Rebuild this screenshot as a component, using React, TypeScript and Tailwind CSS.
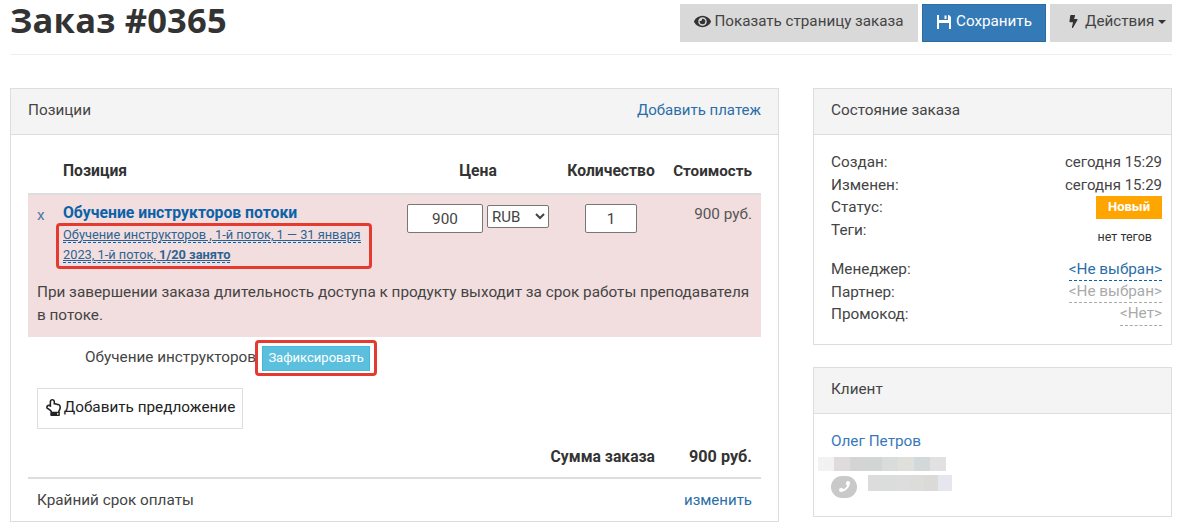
import React from "react";
import { FaEye, FaBolt, FaRegHandPointUp, FaPhoneAlt } from "react-icons/fa";

function Mosaic({ colors, cell, h }: { colors: string[]; cell: string; h: string }) {
  return (
    <div className={`flex ${h}`}>
      {colors.map((c, i) => (
        <div key={i} className={cell} style={{ backgroundColor: c }} />
      ))}
    </div>
  );
}

function StateRow({ label, children, cls = "" }: { label: string; children: React.ReactNode; cls?: string }) {
  return (
    <div className={`flex justify-between ${cls}`}>
      <span>{label}</span>
      {children}
    </div>
  );
}

function Floppy() {
  return (
    <svg viewBox="0 0 16 16" className="w-[16px] h-[16px]" fill="currentColor">
      <path d="M1 1h2v5h9V1h1l2 2v12h-2V9H3v6H1z" />
      <path d="M8.500 1.500h2V5h-2z" />
    </svg>
  );
}

export default function App() {
  return (
    <div className="w-[1190px] h-[524px] overflow-hidden bg-white text-[15.300px] leading-[22.5px] text-[#333] font-['Roboto',sans-serif]">
      <div className="w-[1162px] ml-[10px]">
        <div className="flex justify-between h-[55px] border-b border-[#eee]">
          <h1 className="text-[34.500px] leading-[40px] font-['Open_Sans',sans-serif] font-bold text-[#333] tracking-[0.2px]">Заказ #0365</h1>
          <div className="flex gap-1 pt-1 h-[42px] box-content">
            <button className="h-[38px] w-[238px] bg-[#d9d9d9] flex items-center justify-center gap-[3px] text-[#444] pb-[3px] text-[15.200px]">
              <FaEye className="text-[17px] text-[#333]" /> Показать страницу заказа
            </button>
            <button className="h-[38px] w-[124px] bg-[#337ab7] border border-[#2e6da4] flex items-center justify-center gap-[4px] text-white pb-[3px] text-[15.200px]">
              <Floppy /> Сохранить
            </button>
            <button className="h-[38px] w-[122px] bg-[#d9d9d9] flex items-center justify-start pl-[17px] gap-[5px] text-[#444] pb-[3px] text-[15.200px]">
              <FaBolt className="text-[13px] text-[#333]" /> Действия
              <span className="border-x-[4.500px] border-x-transparent border-t-[4.500px] border-t-[#333] -ml-[1px]" />
            </button>
          </div>
        </div>

        <div className="flex gap-[34px] mt-[33px] items-start">
          <div className="w-[769px] border border-[#ddd] shrink-0">
            <div className="h-[46px] bg-[#f4f4f4] border-b border-[#ddd] px-[17px] flex items-center justify-between pb-[3px]">
              <span className="text-[#444]">Позиции</span>
              <a className="text-[#2a6ea8] text-[15px]">Добавить платеж</a>
            </div>
            <div className="px-[17px]">
              <div className="h-[60px] pt-[15px] flex items-center font-bold text-[15.700px] border-b-2 border-[#ddd]">
                <div className="w-[35px]" />
                <div className="w-[344px]">Позиция</div>
                <div className="w-[142px] text-center">Цена</div>
                <div className="w-[124px] text-center">Количество</div>
                <div className="w-[79px] text-right text-[15.200px]">Стоимость</div>
              </div>

              <div className="bg-[#f2dede] h-[142px] px-[9px] pt-[9px]">
                <div className="flex items-start">
                  <div className="w-[26px] text-[#4a7aa5]">x</div>
                  <div className="w-[344px] -mt-[2px]">
                    <div className="font-bold text-[15.750px] text-[#0b62a8] leading-[22px]">Обучение инструкторов потоки</div>
                    <div className="relative text-[12.800px] leading-[20px] w-[300px] mt-[1px] text-[#2a6494]">
                      <span className="underline decoration-[#2a6494] border-b border-dashed border-[#0b62a8]">
                        Обучение инструкторов , 1-й поток, 1 — 31 января 2023, 1-й поток, <b>1/20 занято</b>
                      </span>
                      <div className="absolute -left-[7px] -top-[2px] w-[316px] h-[46px] border-[3px] border-[#e53a30] rounded-[4px]" />
                    </div>
                  </div>
                  <div className="flex items-start gap-1 w-[142px]">
                    <input
                      readOnly
                      value="900"
                      className="w-[76px] h-[29px] bg-white border border-[#777] rounded-[2px] text-center text-[#444]"
                    />
                    <select className="w-[62px] h-[23px] mt-[1px] bg-white border border-[#777] rounded-[2px] text-[#444] text-[15px] leading-[20px]">
                      <option>RUB</option>
                    </select>
                  </div>
                  <div className="w-[124px] flex justify-center">
                    <input
                      readOnly
                      value="1"
                      className="w-[52px] h-[29px] bg-white border border-[#777] rounded-[2px] text-center text-[#444]"
                    />
                  </div>
                  <div className="w-[79px] text-right -mt-[1px] text-[#555]">900 руб.</div>
                </div>
                <p className="mt-[16px] text-[#444] w-[720px]">
                  При завершении заказа длительность доступа к продукту выходит за срок работы преподавателя в потоке.
                </p>
              </div>

              <div className="h-[40px] flex items-center pl-[57px] pt-[2px]">
                <span className="text-[#444] pb-[2px]">Обучение инструкторов</span>
                <span className="relative ml-[6px]">
                  <button className="h-[25px] w-[108px] bg-[#5bc0de] border border-[#46b8da] text-white text-[13px] leading-[18px] block">
                    Зафиксировать
                  </button>
                  <span className="absolute -left-[7px] -top-[6px] w-[122px] h-[36px] border-[3px] border-[#e53a30] rounded-[4px]" />
                </span>
              </div>

              <button className="ml-[9px] mt-[11px] w-[206px] h-[41px] border border-[#ddd] flex items-center justify-center gap-[2px] text-[#222] pb-[3px]">
                <FaRegHandPointUp className="text-[17px]" /> Добавить предложение
              </button>

              <div className="h-[50px] flex items-center justify-end pr-[9px] pt-[9px] font-bold text-[15.700px] border-b-2 border-[#ddd]">
                <span>Сумма заказа</span>
                <span className="ml-[34px] text-[16.200px]">900 руб.</span>
              </div>
              <div className="h-[42px] flex items-center justify-between px-[9px] text-[#444]">
                <span>Крайний срок оплаты</span>
                <a className="text-[#2a6ea8] text-[15px]">изменить</a>
              </div>
            </div>
          </div>

          <div className="w-[359px] flex flex-col gap-[22px]">
            <div className="border border-[#ddd] h-[257px]">
              <div className="h-[46px] bg-[#f4f4f4] border-b border-[#ddd] px-[17px] flex items-center pb-[3px] text-[#444]">Состояние заказа</div>
              <div className="pl-[17px] pr-[9px] pt-[16px] text-[#444] leading-[22.5px]">
                <StateRow label="Создан:"><span className="text-[15px]">сегодня 15:29</span></StateRow>
                <StateRow label="Изменен:"><span className="text-[15px]">сегодня 15:29</span></StateRow>
                <StateRow label="Статус:">
                  <span className="bg-[#ffa500] text-white font-bold text-[13px] w-[66px] h-[23px] flex items-center justify-center">Новый</span>
                </StateRow>
                <StateRow label="Теги:">
                  <span className="text-[12.500px] text-[#333] pr-[10px] pt-[7px]">нет тегов</span>
                </StateRow>
                <StateRow label="Менеджер:" cls="mt-[9px]">
                  <span className="text-[#2a6ea8] border-b border-dashed border-[#0b62a8] leading-[22px]">&lt;Не выбран&gt;</span>
                </StateRow>
                <StateRow label="Партнер:">
                  <span className="text-[#aaa] border-b border-dashed border-[#aaa] leading-[21.500px]">&lt;Не выбран&gt;</span>
                </StateRow>
                <StateRow label="Промокод:">
                  <span className="text-[#aaa] border-b border-dashed border-[#aaa] leading-[21px]">&lt;Нет&gt;</span>
                </StateRow>
              </div>
            </div>

            <div className="border border-[#ddd] h-[150px]">
              <div className="h-[46px] bg-[#f4f4f4] border-b border-[#ddd] px-[17px] flex items-center pb-[3px] text-[#444]">Клиент</div>
              <div className="px-[17px] pt-[16px]">
                <a className="text-[#3a78b8] block">Олег Петров</a>
                <div className="-ml-[13px] mt-[4px]">
                  <Mosaic
                    h="h-[14px]"
                    cell="w-[16px] h-full"
                    colors={["#f2f2f2", "#dddbdb", "#d3d5d5", "#d3d5d5", "#dadcdb", "#dfdfdc", "#d3d9da", "#e2e0e1"]}
                  />
                </div>
                <div className="flex items-start gap-[11px] mt-[4px]">
                  <div className="w-[26px] h-[22px] mt-[1px] rounded-full bg-[#c9c9c9] flex items-center justify-center text-white text-[11px]">
                    <FaPhoneAlt className="-scale-x-100" />
                  </div>
                  <Mosaic
                    h="h-[16px]"
                    cell="w-[14px] h-full"
                    colors={["#dcdcdc", "#dbdddc", "#dcdddc", "#dcdcdb", "#dbdad9", "#e6e7ee"]}
                  />
                </div>
              </div>
            </div>
          </div>
        </div>
      </div>
    </div>
  );
}
